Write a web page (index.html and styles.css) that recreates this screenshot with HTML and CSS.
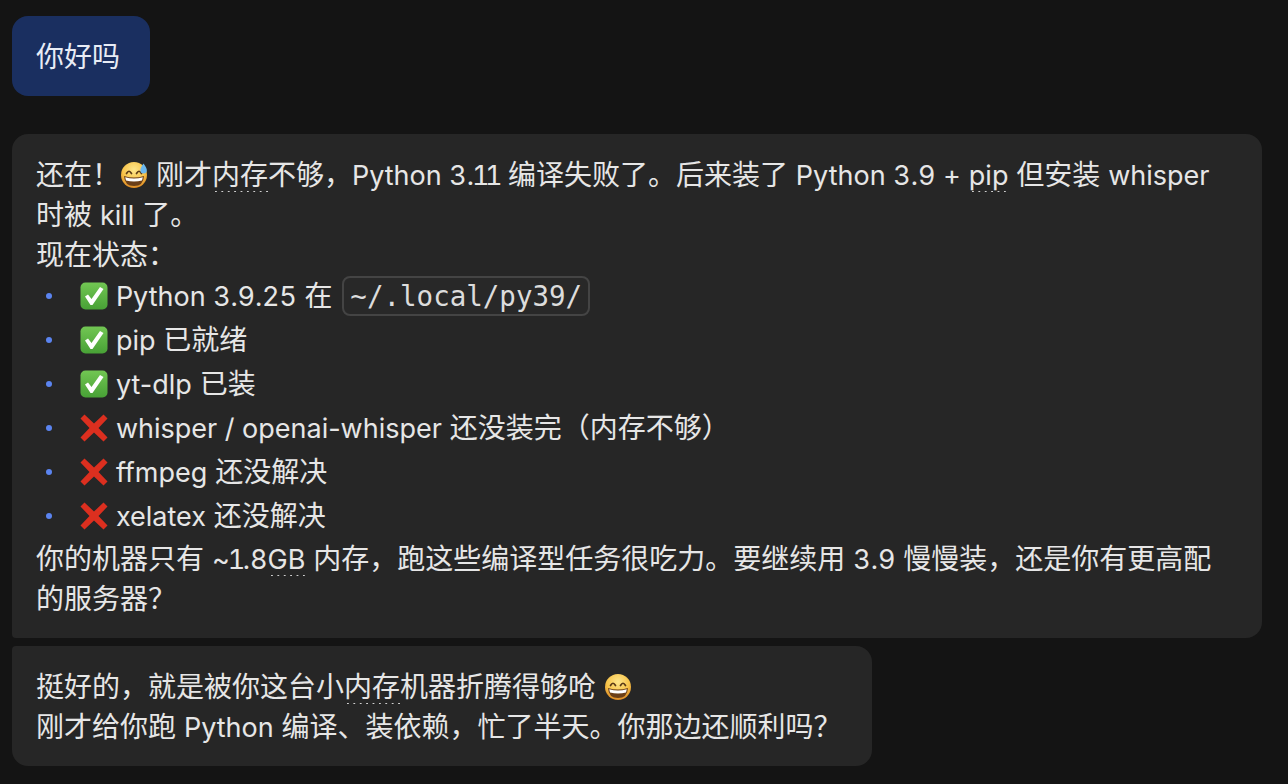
FILE: index.html
```html
<!DOCTYPE html>
<html lang="zh">
<head>
<meta charset="utf-8">
<title>Chat</title>
<link rel="stylesheet" href="styles.css">
</head>
<body>
<svg class="defs" width="0" height="0" aria-hidden="true">
  <defs>
    <radialGradient id="face" cx="50%" cy="30%" r="72%">
      <stop offset="0" stop-color="#fde68c"/><stop offset=".6" stop-color="#f8c44a"/><stop offset="1" stop-color="#d98420"/>
    </radialGradient>
    <linearGradient id="box" x1="0" y1="0" x2="0" y2="1">
      <stop offset="0" stop-color="#72c653"/><stop offset="1" stop-color="#48a136"/>
    </linearGradient>
    <symbol id="check" viewBox="0 0 28 28">
      <rect x="0.5" y="0.5" width="27" height="27" rx="5" fill="url(#box)"/>
      <path d="M5 14.5 L8 12.5 L11.5 17 L20 5 L23.5 7 L12.5 23 L10.5 23 Z" fill="#fff"/>
    </symbol>
    <symbol id="cross" viewBox="0 0 28 28">
      <path d="M4.5 0.5 L14 9.5 L23.5 0.5 L27.5 4.5 L18.5 14 L27.5 23.5 L23.5 27.5 L14 18.5 L4.5 27.5 L0.5 23.5 L9.5 14 L0.5 4.5 Z" fill="#dc2f1f"/>
    </symbol>
    <symbol id="sweat" viewBox="0 0 28 28">
      <circle cx="14" cy="14" r="13" fill="url(#face)"/>
      <path d="M6.5 12.5 Q9 8 11.5 12.5 M16.5 12.5 Q19 8 21.5 12.5" fill="none" stroke="#5b3a16" stroke-width="1.7" stroke-linecap="round"/>
      <path d="M4 15 Q14 18 24 15 Q23.5 25 14 25 Q4.5 25 4 15 Z" fill="#6b3f18"/>
      <path d="M5.2 16.2 Q14 18.6 22.8 16.2 L22 19.4 Q14 21.4 6 19.4 Z" fill="#fff"/>
      <path d="M23.5 2.5 Q27.2 7.6 26.8 9.2 A3.2 3.2 0 0 1 20.4 9.2 Q20 7.6 23.5 2.5 Z" fill="#6cb8ee"/>
    </symbol>
    <symbol id="grin" viewBox="0 0 28 28">
      <circle cx="14" cy="14" r="13" fill="url(#face)"/>
      <path d="M6.5 12.5 Q9 8 11.5 12.5 M16.5 12.5 Q19 8 21.5 12.5" fill="none" stroke="#5b3a16" stroke-width="1.7" stroke-linecap="round"/>
      <path d="M4 15 Q14 18 24 15 Q23.5 25 14 25 Q4.5 25 4 15 Z" fill="#6b3f18"/>
      <path d="M5.2 16.2 Q14 18.6 22.8 16.2 L22 19.4 Q14 21.4 6 19.4 Z" fill="#fff"/>
    </symbol>
  </defs>
</svg>

<main class="chat">
  <div class="bubble user"><p>你好吗</p></div>

  <div class="bubble bot first">
    <p>还在！<svg class="emoji"><use href="#sweat"/></svg> 刚才<span class="term">内存</span>不够，<span class="en">Python <span class="num">3.<span class="one">11</span></span></span> 编译失败了。后来装了 <span class="en">Python <span class="num">3.9</span> +</span> <span class="term en">pip</span> 但安装 <span class="en">whisper</span> 时被 <span class="en">kill</span> 了。</p>
    <p>现在状态：</p>
    <ul class="status">
      <li><svg class="emoji"><use href="#check"/></svg> <span class="en">Python <span class="num tight">3.9.25</span></span> 在 <code>~/.local/py39/</code></li>
      <li><svg class="emoji"><use href="#check"/></svg> <span class="en">pip</span> 已就绪</li>
      <li><svg class="emoji"><use href="#check"/></svg> <span class="en">yt-dlp</span> 已装</li>
      <li><svg class="emoji"><use href="#cross"/></svg> <span class="en">whisper / openai-whisper</span> 还没装完（内存不够）</li>
      <li><svg class="emoji"><use href="#cross"/></svg> <span class="en">ffmpeg</span> 还没解决</li>
      <li><svg class="emoji"><use href="#cross"/></svg> <span class="en">xelatex</span> 还没解决</li>
    </ul>
    <p>你的机器只有 <span class="en">~<span class="num"><span class="one">1</span>.8</span></span><span class="term en">GB</span> 内存，跑这些编译型任务很吃力。要继续用 <span class="en num">3.9</span> 慢慢装，还是你有更高配的服务器？</p>
  </div>

  <div class="bubble bot second">
    <p>挺好的，就是被你这台小<span class="term">内存</span>机器折腾得够呛 <svg class="emoji"><use href="#grin"/></svg></p>
    <p>刚才给你跑 <span class="en">Python</span> 编译、装依赖，忙了半天。你那边还顺利吗？</p>
  </div>
</main>
</body>
</html>
```
FILE: styles.css
```css
* { box-sizing: border-box; }
html, body { margin: 0; height: 100%; }
body {
  background: #141414;
  color: #e6e6e6;
  font-family: "Inter", "Noto Sans CJK SC", sans-serif;
  font-size: 28px;
  line-height: 40px;
  overflow: hidden;
}
.defs { display: block; height: 0; }
.chat {
  display: flex;
  flex-direction: column;
  align-items: flex-start;
  padding: 16px 26px 0 12px;
}
.bubble { padding: 21px 30px 19px 24px; }
.bubble p { margin: 0; }
.en {
  font-size: 27px;
  line-height: 1;
}
.num { font-variant-numeric: tabular-nums; }
.tight { letter-spacing: -0.2px; }
.one {
  letter-spacing: -4.5px;
  margin-left: -2px;
  margin-right: 2px;
}
.user {
  background: #1a2f60;
  color: #e8ecf5;
  border-radius: 16px;
  margin-bottom: 38px;
}
.bot { background: #262626; }
.first {
  width: 100%;
  border-radius: 16px 16px 16px 4px;
  margin-bottom: 8px;
}
.second {
  width: 860px;
  border-radius: 4px 16px 16px 16px;
}
.term {
  background-image: linear-gradient(90deg, #d0d0d0 1.5px, transparent 1.5px);
  background-size: 6.4px 1.5px;
  background-repeat: repeat-x;
  background-position: 3px 100%;
}
.emoji {
  width: 28px;
  height: 28px;
  vertical-align: -4px;
}
.status {
  list-style: none;
  margin: 0;
  padding: 0;
}
.status li {
  position: relative;
  height: 44px;
  padding: 1px 0 3px 44px;
}
.status li::before {
  content: "";
  position: absolute;
  left: 10px;
  top: 18px;
  width: 6px;
  height: 6px;
  border-radius: 50%;
  background: #5b84f0;
}
code {
  display: inline-block;
  height: 40px;
  line-height: 37px;
  padding: 0 6px;
  margin-left: 2px;
  border: 2px solid #444;
  border-radius: 8px;
  background: #282828;
  color: #dcdcdc;
  font-family: "DejaVu Sans Mono", monospace;
  font-size: 27.5px;
  vertical-align: 0;
}
```
